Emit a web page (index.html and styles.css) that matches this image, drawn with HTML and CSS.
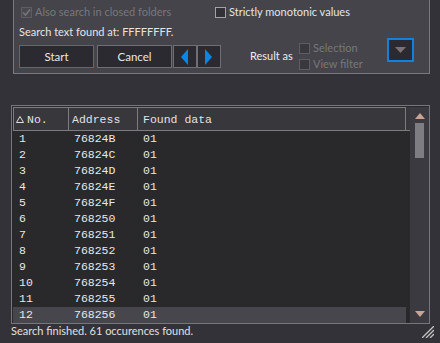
FILE: index.html
```html
<!DOCTYPE html>
<html lang="en">
<head>
  <meta charset="UTF-8">
  <title>Search results</title>
  <link rel="stylesheet" href="styles.css">
</head>
<body>
  <div class="panel">
    <div class="opts">
      <label class="chk disabled first"><span class="box checked"><svg width="9" height="9" viewBox="0 0 9 9"><path d="M1 4.5 L3.5 7 L8 1.5" fill="none" stroke="#77767b" stroke-width="1.6"/></svg></span>Also search in closed folders</label>
      <label class="chk"><span class="box"></span>Strictly monotonic values</label>
    </div>
    <div class="found">Search text found at: FFFFFFFF.</div>
    <div class="actions">
      <button class="btn primary">Start</button>
      <button class="btn cancel">Cancel</button>
      <button class="btn arrow"><svg width="8" height="16" viewBox="0 0 8 16"><path d="M7 0 L0 8 L7 16 Z" fill="#0c86e4"/></svg></button>
      <button class="btn arrow"><svg width="8" height="16" viewBox="0 0 8 16"><path d="M0 0 L7 8 L0 16 Z" fill="#0c86e4"/></svg></button>
      <span class="result-label">Result as</span>
      <div class="result-opts">
        <label class="chk small disabled"><span class="box dim"></span>Selection</label>
        <label class="chk small disabled"><span class="box dim"></span>View filter</label>
      </div>
      <button class="drop"><svg width="11" height="6" viewBox="0 0 11 6"><path d="M0 0 L11 0 L5.5 6 Z" fill="#7b7176"/></svg></button>
    </div>
  </div>

  <div class="table">
    <div class="list">
      <div class="head">
        <div class="hcell c1"><svg class="sort" width="8" height="7" viewBox="0 0 8 7"><path d="M4 0.5 L7.5 6.5 L0.5 6.5 Z" fill="none" stroke="#e0e0e0" stroke-width="1"/></svg>No.</div>
        <div class="hcell c2">Address</div>
        <div class="hcell c3">Found data</div>
      </div>
      <div class="row"><span class="c1">1</span><span class="c2">76824B</span><span class="c3">01</span></div>
      <div class="row"><span class="c1">2</span><span class="c2">76824C</span><span class="c3">01</span></div>
      <div class="row"><span class="c1">3</span><span class="c2">76824D</span><span class="c3">01</span></div>
      <div class="row"><span class="c1">4</span><span class="c2">76824E</span><span class="c3">01</span></div>
      <div class="row"><span class="c1">5</span><span class="c2">76824F</span><span class="c3">01</span></div>
      <div class="row"><span class="c1">6</span><span class="c2">768250</span><span class="c3">01</span></div>
      <div class="row"><span class="c1">7</span><span class="c2">768251</span><span class="c3">01</span></div>
      <div class="row"><span class="c1">8</span><span class="c2">768252</span><span class="c3">01</span></div>
      <div class="row"><span class="c1">9</span><span class="c2">768253</span><span class="c3">01</span></div>
      <div class="row"><span class="c1">10</span><span class="c2">768254</span><span class="c3">01</span></div>
      <div class="row"><span class="c1">11</span><span class="c2">768255</span><span class="c3">01</span></div>
      <div class="row selected"><span class="c1">12</span><span class="c2">768256</span><span class="c3">01</span></div>
    </div>
    <div class="scroll">
      <svg class="sarrow" width="10" height="6" viewBox="0 0 10 6"><path d="M5 0 L10 6 L0 6 Z" fill="#c9a495"/></svg>
      <div class="thumb"></div>
      <svg class="sarrow down" width="10" height="6" viewBox="0 0 10 6"><path d="M0 0 L10 0 L5 6 Z" fill="#c9a495"/></svg>
    </div>
  </div>

  <div class="status">
    <span>Search finished. 61 occurences found.</span>
    <svg class="grip" width="12" height="12" viewBox="0 0 12 12"><path d="M0 12 L12 0 M4 12 L12 4 M8 12 L12 8" stroke="#c4c4c4" stroke-width="1.3"/></svg>
  </div>
</body>
</html>
```

FILE: styles.css
```css
body {
  margin: 0;
  width: 440px;
  height: 343px;
  overflow: hidden;
  background: #333238;
  font-family: Lato, "Liberation Sans", Arial, sans-serif;
  font-size: 11px;
  color: #e4e4e4;
}
.panel {
  box-sizing: border-box;
  margin: -1px 0 0 13px;
  width: 417px;
  height: 75px;
  border: 1px solid #7a797e;
  background: #45444a;
  padding: 0 15px 0 5px;
}
.opts {
  display: flex;
  align-items: center;
  height: 24px;
}
.chk {
  display: flex;
  align-items: center;
  line-height: 14px;
  white-space: nowrap;
}
.chk.disabled { color: #78777c; }
.chk.first {
  width: 194px;
  margin-left: 2px;
}
.box {
  box-sizing: border-box;
  flex: none;
  width: 11px;
  height: 11px;
  margin-right: 3px;
  border: 1px solid #a3a3a6;
  background: #323137;
  display: flex;
  align-items: center;
  justify-content: center;
}
.box.checked {
  border-color: #5e5d63;
  background: #4a4950;
}
.box.dim {
  border-color: #5e5d63;
  background: #39383e;
}
.found {
  height: 14px;
  line-height: 15px;
}
.actions {
  display: flex;
  align-items: flex-start;
  height: 35px;
}
.btn {
  box-sizing: border-box;
  height: 23px;
  margin-top: 7px;
  border: 1px solid #6f6e73;
  background: #2b2a30;
  color: #e8e8e8;
  font-family: inherit;
  font-size: 11.5px;
  padding: 0;
  display: flex;
  align-items: center;
  justify-content: center;
}
.btn.primary {
  width: 75px;
  border-color: #0f7fd6;
}
.btn.cancel {
  width: 75px;
  margin-left: 3px;
  margin-right: 1px;
}
.btn.arrow { width: 24px; }
.result-label {
  width: 49px;
  margin: 11px 0 0 29px;
  line-height: 14px;
  white-space: nowrap;
  color: #ececec;
}
.result-opts {
  margin-top: 2px;
}
.chk.small { height: 16px; }
.drop {
  box-sizing: border-box;
  width: 27px;
  height: 24px;
  margin-left: auto;
  border: 2px solid #1580da;
  background: #2b2a30;
  padding: 0;
  display: flex;
  align-items: center;
  justify-content: center;
}
.table {
  box-sizing: border-box;
  display: flex;
  margin: 31px 0 0 11px;
  width: 419px;
  height: 219px;
  border: 1px solid #77767b;
  padding: 1px 0 0 1px;
  background: #29292c;
}
.list {
  flex: 1;
  overflow: hidden;
  font-family: "Liberation Mono", "Courier New", monospace;
  font-size: 11.5px;
}
.head {
  display: flex;
  height: 24px;
  border-bottom: 1px solid #7d7c81;
  box-sizing: border-box;
  background: #38373c;
}
.hcell {
  box-sizing: border-box;
  display: flex;
  align-items: center;
  border-left: 1px solid #7d7c81;
  border-top: 1px solid #7d7c81;
  color: #e2e2e2;
  padding-left: 3px;
}
.hcell.c1 { width: 55px; padding-left: 2px; }
.hcell.c2 { width: 69px; }
.hcell.c3 { width: 269px; border-right: 1px solid #7d7c81; padding-left: 5px; }
.sort { margin-right: 3px; }
.row {
  display: flex;
  width: 393px;
  height: 16px;
  line-height: 16px;
  color: #e8e8e8;
}
.row span { padding-left: 6px; box-sizing: border-box; }
.row .c1 { width: 55px; }
.row .c2 { width: 69px; }
.row .c3 { flex: 1; }
.row.selected { background: #47464c; }
.scroll {
  width: 19px;
  background: #3b3a40;
  display: flex;
  flex-direction: column;
  align-items: center;
}
.sarrow { margin-top: 6px; }
.thumb {
  width: 9px;
  height: 35px;
  margin-top: 4px;
  background: #7e7d82;
}
.sarrow.down { margin-top: auto; margin-bottom: 6px; }
.status {
  display: flex;
  height: 16px;
  padding-left: 11px;
  padding-right: 6px;
  color: #e0e0e0;
}
.status span { line-height: 13px; }
.grip {
  margin-left: auto;
  align-self: flex-end;
  margin-bottom: 2px;
}
```
